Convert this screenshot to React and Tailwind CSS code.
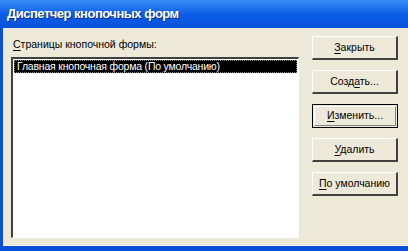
export default function App() {
  const buttons = [
    { label: 'Закрыть', u: 0 },
    { label: 'Создать...', u: 4 },
    { label: 'Изменить...', u: 0, isDefault: true },
    { label: 'Удалить', u: 0 },
    { label: 'По умолчанию', u: 0 },
  ];

  return (
    <div className="flex h-[251px] w-[408px] flex-col overflow-hidden bg-[#0a4fd8] font-['Liberation_Sans',sans-serif] text-[10.5px] text-black">
      <div className="flex h-[28px] shrink-0 items-center bg-gradient-to-b from-[#3a8ef8] via-[#0a5ee6] to-[#0a52dc] pl-[7px]">
        <span className="text-[13px] font-bold tracking-[-0.5px] text-white [text-shadow:1px_1px_0_#0a2a88]">
          Диспетчер кнопочных форм
        </span>
      </div>
      <div className="ml-[3px] flex h-[217px] bg-[#ece9d8] pr-[10px]">
        <div className="flex w-[296px] flex-col pl-[8px] pt-[9px]">
          <div className="h-[20px] pl-[2px]">
            <span className="underline underline-offset-2">С</span>траницы кнопочной формы:
          </div>
          <div className="flex h-[181px] flex-col border-l-2 border-t-2 border-[#404040] border-b border-r border-b-white border-r-white bg-white">
            <div className="m-[1px] flex h-[13px] items-center border border-dotted border-[#888] bg-black pl-[2px] leading-none tracking-[-0.2px] text-white">
              Главная кнопочная форма (По умолчанию)
            </div>
          </div>
        </div>
        <div className="ml-auto flex w-[86px] flex-col gap-[10px] pt-[8px]">
          {buttons.map((b) => (
            <div
              key={b.label}
              className={
                b.isDefault
                  ? 'flex h-[24px] items-center justify-center border border-black bg-[#ece9d8]'
                  : 'flex h-[24px] items-center justify-center border-b-2 border-r-2 border-[#404040] border-t border-l border-t-white border-l-white bg-[#ece9d8]'
              }
            >
              <span
                className={
                  b.isDefault
                    ? 'flex h-[20px] w-[82px] items-center justify-center border-b border-r border-[#808080] border-t border-l border-t-white border-l-white'
                    : ''
                }
              >
                {b.label.slice(0, b.u)}
                <span className="underline underline-offset-2">{b.label[b.u]}</span>
                {b.label.slice(b.u + 1)}
              </span>
            </div>
          ))}
        </div>
      </div>
      <div className="ml-[3px] h-[1px] bg-[#f4f2e8]" />
    </div>
  );
}
